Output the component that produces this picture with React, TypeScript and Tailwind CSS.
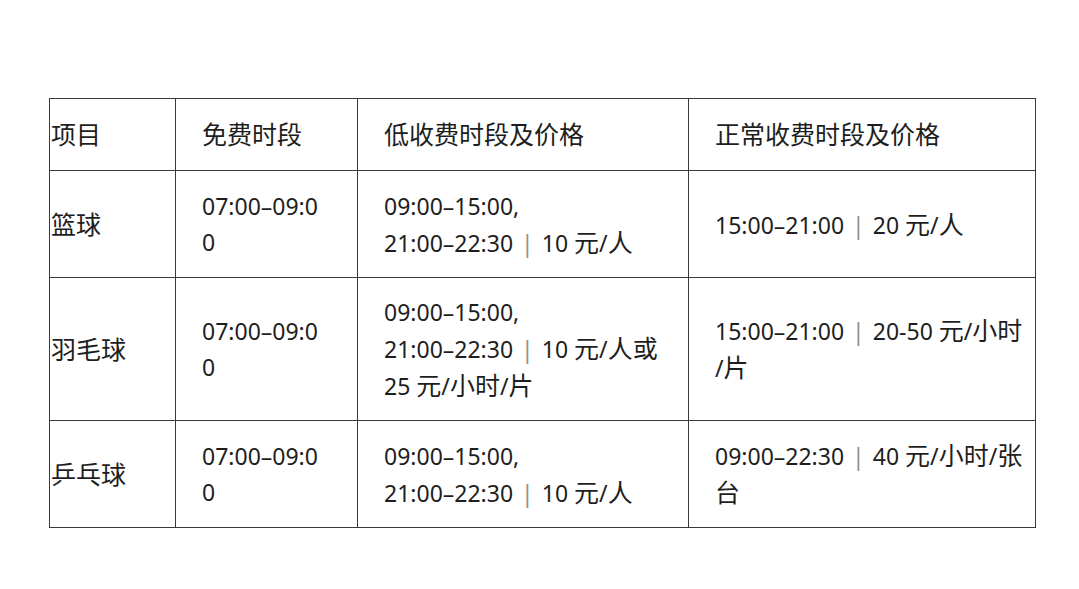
const rows = [
  {
    name: '篮球',
    free: ['07:00–09:0', '0'],
    low: ['09:00–15:00,', '21:00–22:30丨10 元/人'],
    normal: ['15:00–21:00丨20 元/人']
  },
  {
    name: '羽毛球',
    free: ['07:00–09:0', '0'],
    low: ['09:00–15:00,', '21:00–22:30丨10 元/人或', '25 元/小时/片'],
    normal: ['15:00–21:00丨20-50 元/小时', '/片']
  },
  {
    name: '乒乓球',
    free: ['07:00–09:0', '0'],
    low: ['09:00–15:00,', '21:00–22:30丨10 元/人'],
    normal: ['09:00–22:30丨40 元/小时/张', '台']
  }
];

// CJK glyphs in the picture sit a little larger than the digits
const Mixed = ({ text }: { text: string }) => (
  <>
    {text.split(/(丨|[\u4e00-\u9fff]+)/).map((part, i) => {
      if (!part) return null;
      if (part === '丨')
        return (
          <span key={i} className="px-[8px] text-[#8f8f8f]">
            |
          </span>
        );
      if (/[\u4e00-\u9fff]/.test(part))
        return (
          <span key={i} className="text-[25px]">
            {part}
          </span>
        );
      return <span key={i}>{part}</span>;
    })}
  </>
);

const Lines = ({ lines }: { lines: string[] }) => (
  <>
    {lines.map((l, i) => (
      <div key={i} className="whitespace-nowrap">
        <Mixed text={l} />
      </div>
    ))}
  </>
);

const cell = 'border border-[#3a3a3a] align-middle';

export default function App() {
  return (
    <div
      className="min-h-[589px] w-[1079px] bg-white pl-[49px] pt-[98px] text-[23px] leading-[36px] text-[#1e1e1e]"
      style={{ fontFamily: '"Noto Sans", "Noto Sans CJK SC", sans-serif' }}
    >
      <table className="table-fixed border-collapse">
        <colgroup>
          <col className="w-[126px]" />
          <col className="w-[182px]" />
          <col className="w-[331px]" />
          <col className="w-[347px]" />
        </colgroup>
        <tbody>
          <tr className="h-[72px]">
            <td className={`${cell} pl-[1px]`}>
              <Mixed text="项目" />
            </td>
            <td className={`${cell} pl-[26px]`}>
              <Mixed text="免费时段" />
            </td>
            <td className={`${cell} pl-[26px]`}>
              <Mixed text="低收费时段及价格" />
            </td>
            <td className={`${cell} pl-[26px]`}>
              <Mixed text="正常收费时段及价格" />
            </td>
          </tr>
          {rows.map((r, i) => (
            <tr
              key={r.name}
              className={i === 1 ? 'h-[143px]' : 'h-[107px]'}
            >
              <td className={`${cell} pl-[1px]`}>
                <Mixed text={r.name} />
              </td>
              <td className={`${cell} pl-[26px]`}>
                <Lines lines={r.free} />
              </td>
              <td className={`${cell} pl-[26px]`}>
                <Lines lines={r.low} />
              </td>
              <td className={`${cell} pl-[26px]`}>
                <Lines lines={r.normal} />
              </td>
            </tr>
          ))}
        </tbody>
      </table>
    </div>
  );
}
